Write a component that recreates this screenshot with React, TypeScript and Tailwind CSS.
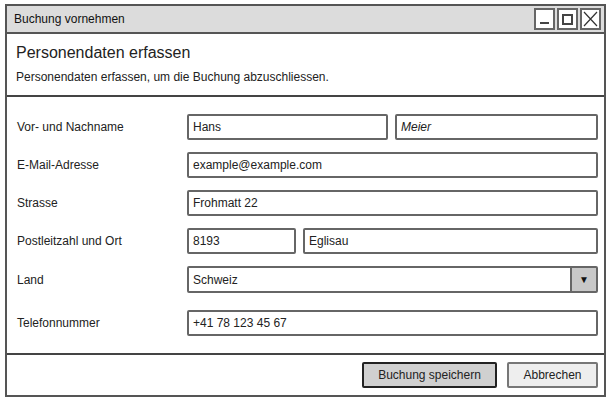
import React from "react";

const font = { fontFamily: '"Liberation Sans", Arial, sans-serif' };

const Field: React.FC<{ value: string; className?: string; italic?: boolean }> = ({ value, className = "", italic }) => (
  <div
    className={`h-[26px] flex items-center px-[4px] border-2 border-[#666] rounded-[2px] bg-white text-[12px] text-[#222] ${italic ? "italic" : ""} ${className}`}
  >
    {value}
  </div>
);

const Row: React.FC<{ label: string; children: React.ReactNode; className?: string }> = ({ label, children, className = "" }) => (
  <div className={`flex items-center ${className}`}>
    <div className="w-[180px] pl-[10px] text-[12px] text-[#222]">{label}</div>
    <div className="flex-1 flex gap-[7px]">{children}</div>
  </div>
);

export default function App() {
  return (
    <div className="w-[611px] h-[403px] bg-white pt-[4px] pl-[5px]" style={font}>
      <div className="w-[601px] h-[393px] border-2 border-[#555] flex flex-col bg-white">
        {/* title bar */}
        <div className="h-[28px] bg-[#dcdcdc] border-b-2 border-[#555] flex items-center justify-between pl-[7px] pr-[3px]">
          <span className="text-[12px] text-[#111]">Buchung vornehmen</span>
          <div className="flex gap-[2px]">
            <div className="w-[21px] h-[22px] border-2 border-[#666] bg-white flex items-end justify-center pb-[4px]">
              <div className="w-[9px] h-[2px] bg-[#444]" />
            </div>
            <div className="w-[21px] h-[22px] border-2 border-[#666] bg-white flex items-center justify-center">
              <div className="w-[11px] h-[11px] border-2 border-[#444]" />
            </div>
            <div className="w-[21px] h-[22px] border-2 border-[#666] bg-white flex items-center justify-center">
              <svg width="15" height="16" viewBox="0 0 15 16">
                <path d="M1 1 L14 15 M14 1 L1 15" stroke="#333" strokeWidth="1.2" fill="none" />
              </svg>
            </div>
          </div>
        </div>

        {/* header */}
        <div className="h-[63px] border-b-2 border-[#444] pl-[9px] pt-[9px]">
          <div className="text-[16px] leading-[20px] text-[#222]">Personendaten erfassen</div>
          <div className="text-[12px] leading-[16px] mt-[6px] text-[#222]">
            Personendaten erfassen, um die Buchung abzuschliessen.
          </div>
        </div>

        {/* form */}
        <div className="flex-1 flex flex-col pt-[17px] pr-[6px] gap-[12px] border-b-2 border-[#444]">
          <Row label="Vor- und Nachname">
            <Field value="Hans" className="w-[201px]" />
            <Field value="Meier" className="flex-1" italic />
          </Row>
          <Row label="E-Mail-Adresse">
            <Field value="example@example.com" className="flex-1" />
          </Row>
          <Row label="Strasse">
            <Field value="Frohmatt 22" className="flex-1" />
          </Row>
          <Row label="Postleitzahl und Ort">
            <Field value="8193" className="w-[109px]" />
            <Field value="Eglisau" className="flex-1" />
          </Row>
          <Row label="Land">
            <div className="flex-1 h-[27px] flex border-2 border-[#666] rounded-[2px] bg-white">
              <div className="flex-1 flex items-center px-[4px] text-[12px] text-[#222]">Schweiz</div>
              <div className="w-[26px] border-l-2 border-[#666] bg-[#c8c8c8] flex items-center justify-center text-[10px] text-[#111]">
                ▼
              </div>
            </div>
          </Row>
          <Row label="Telefonnummer" className="mt-[5px]">
            <Field value="+41 78 123 45 67" className="flex-1" />
          </Row>
        </div>

        {/* footer */}
        <div className="h-[40px] flex justify-end items-start pt-[7px] pr-[6px] gap-[10px]">
          <button className="w-[135px] h-[26px] border-2 border-[#222] rounded-[2px] bg-[#d0d0d0] text-[12px] text-[#222]">
            Buchung speichern
          </button>
          <button className="w-[91px] h-[26px] border-2 border-[#777] rounded-[2px] bg-[#eeeeee] text-[12px] text-[#222]">
            Abbrechen
          </button>
        </div>
      </div>
    </div>
  );
}
